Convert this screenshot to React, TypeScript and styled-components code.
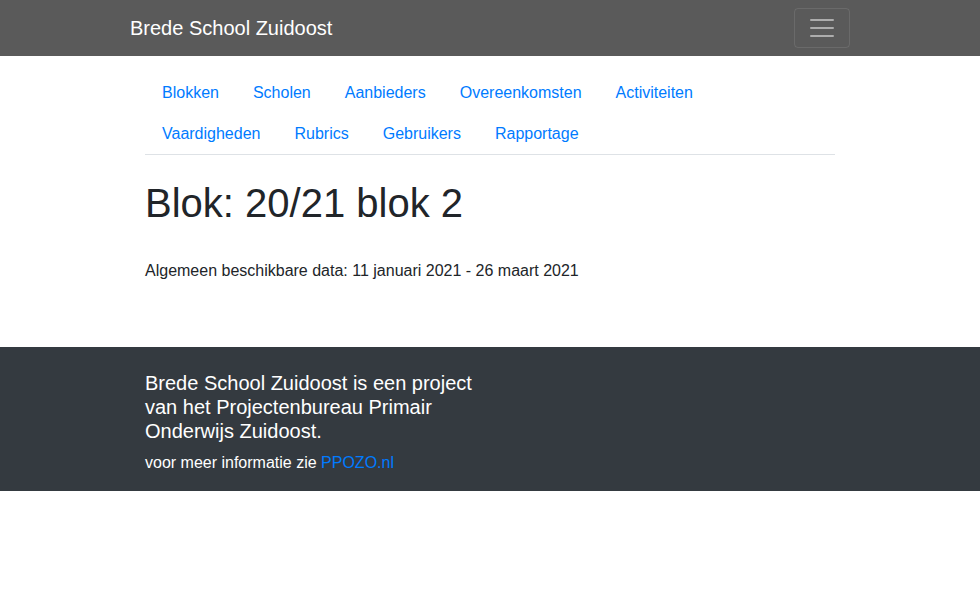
import React from "react";
import styled, { createGlobalStyle } from "styled-components";

const Global = createGlobalStyle`
  * { box-sizing: border-box; }
  body {
    margin: 0;
    font-family: "Liberation Sans", Arial, sans-serif;
    font-size: 16px;
    line-height: 1.5;
    color: #212529;
    background: #fff;
  }
`;

const Container = styled.div`
  width: 720px;
  margin: 0 auto;
  padding: 0 15px;
`;

const NavBar = styled.nav`
  background: #5a5a5a;
  padding: 8px 16px;
`;

const NavInner = styled.div`
  width: 720px;
  margin: 0 auto;
  display: flex;
  align-items: center;
  justify-content: space-between;
`;

const Brand = styled.a`
  color: #fff;
  font-size: 20px;
  line-height: 30px;
  padding: 5px 0;
  text-decoration: none;
`;

const Toggler = styled.button`
  width: 56px;
  height: 40px;
  padding: 4px 12px;
  background: transparent;
  border: 1px solid rgba(255, 255, 255, 0.1);
  border-radius: 4px;
  display: flex;
  align-items: center;
  justify-content: center;
`;

const Tabs = styled.ul`
  list-style: none;
  margin: 16px 0 0;
  padding: 0;
  display: flex;
  flex-wrap: wrap;
  border-bottom: 1px solid #dee2e6;
`;

const TabItem = styled.li`
  margin-bottom: -1px;
`;

const TabLink = styled.a`
  display: block;
  padding: 8px 16px;
  border: 1px solid transparent;
  color: #007bff;
  text-decoration: none;
  line-height: 24px;
`;

const Title = styled.h1`
  font-size: 40px;
  font-weight: 500;
  line-height: 1.2;
  margin: 24px 0 8px;
`;

const Para = styled.p`
  margin: 32px 0 16px;
`;

const Footer = styled.footer`
  background: #343a40;
  color: #fff;
  margin-top: 64px;
  padding: 24px 0 16px;
`;

const FooterCol = styled.div`
  width: 330px;
`;

const FooterTitle = styled.h5`
  font-size: 20px;
  font-weight: 500;
  line-height: 1.2;
  margin: 0 0 8px;
`;

const FooterText = styled.p`
  margin: 0;
`;

const Link = styled.a`
  color: #007bff;
  text-decoration: none;
`;

const tabs = [
  "Blokken",
  "Scholen",
  "Aanbieders",
  "Overeenkomsten",
  "Activiteiten",
  "Vaardigheden",
  "Rubrics",
  "Gebruikers",
  "Rapportage",
];

export default function App() {
  return (
    <>
      <Global />
      <NavBar>
        <NavInner>
          <Brand href="#">Brede School Zuidoost</Brand>
          <Toggler aria-label="menu">
            <svg width="30" height="30" viewBox="0 0 30 30">
              <path
                d="M4 7h22M4 15h22M4 23h22"
                stroke="rgba(255,255,255,0.5)"
                strokeWidth="2"
                strokeLinecap="round"
              />
            </svg>
          </Toggler>
        </NavInner>
      </NavBar>
      <Container>
        <Tabs>
          {tabs.map((t) => (
            <TabItem key={t}>
              <TabLink href="#">{t}</TabLink>
            </TabItem>
          ))}
        </Tabs>
        <Title>Blok: 20/21 blok 2</Title>
        <Para>Algemeen beschikbare data: 11 januari 2021 - 26 maart 2021</Para>
      </Container>
      <Footer>
        <Container>
          <FooterCol>
            <FooterTitle>
              Brede School Zuidoost is een project van het Projectenbureau
              Primair Onderwijs Zuidoost.
            </FooterTitle>
            <FooterText>
              voor meer informatie zie <Link href="#">PPOZO.nl</Link>
            </FooterText>
          </FooterCol>
        </Container>
      </Footer>
    </>
  );
}
